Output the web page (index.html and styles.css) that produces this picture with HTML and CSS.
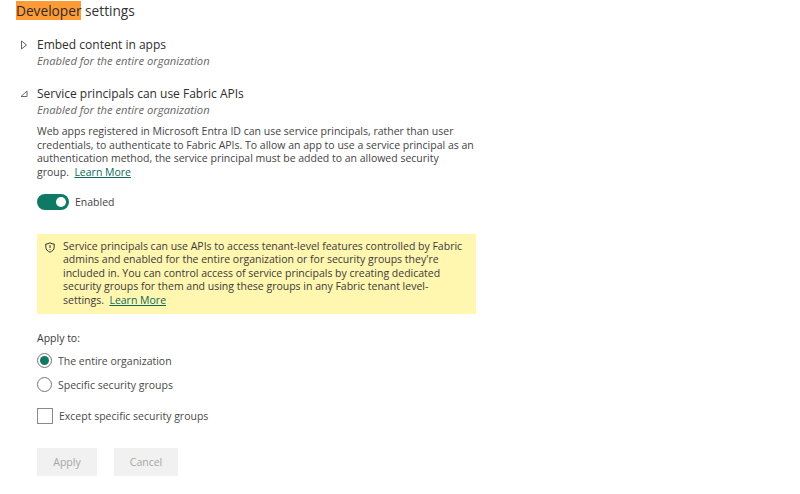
FILE: index.html
```html
<!DOCTYPE html>
<html lang="en">
<head>
<meta charset="utf-8">
<title>Developer settings</title>
<link rel="stylesheet" href="styles.css">
</head>
<body>
<h1 class="title"><mark class="hl">Developer</mark> settings</h1>
<section class="setting collapsed">
  <div class="head">
    <svg class="chev" width="8" height="10" viewBox="0 0 8 10"><path d="M1.5 1 L6.5 5 L1.5 9 Z" fill="none" stroke="#666" stroke-width="1"/></svg>
    <span class="name">Embed content in apps</span>
  </div>
  <p class="sub">Enabled for the entire organization</p>
</section>
<section class="setting">
  <div class="head">
    <svg class="chev" width="8" height="10" viewBox="0 0 8 10"><path d="M7 2 L7 7.5 L1 7.5 Z" fill="none" stroke="#666" stroke-width="1"/></svg>
    <span class="name">Service principals can use Fabric APIs</span>
  </div>
  <p class="sub">Enabled for the entire organization</p>
  <p class="desc">Web apps registered in Microsoft Entra ID can use service principals, rather than user<br>credentials, to authenticate to Fabric APIs. To allow an app to use a service principal as an<br>authentication method, the service principal must be added to an allowed security<br>group.&nbsp; <a class="link" href="#">Learn More</a></p>
  <div class="toggle-row">
    <span class="toggle"><span class="knob"></span></span>
    <span class="toggle-label">Enabled</span>
  </div>
  <div class="notice">
    <svg class="shield" width="10" height="11" viewBox="0 0 10 11"><path d="M5 .7 C6.3 1.7 7.6 2 9.2 2 V5.2 C9.2 7.6 7.4 9.2 5 10.2 C2.6 9.2 .8 7.6 .8 5.2 V2 C2.4 2 3.7 1.7 5 .7 Z" fill="none" stroke="#333" stroke-width="1"/><path d="M5 3 V6" stroke="#333" stroke-width="1"/><circle cx="5" cy="7.5" r=".6" fill="#333"/></svg>
    <p class="notice-text">Service principals can use APIs to access tenant-level features controlled by Fabric<br>admins and enabled for the entire organization or for security groups they're<br>included in. You can control access of service principals by creating dedicated<br>security groups for them and using these groups in any Fabric tenant level-<br>settings.&nbsp; <a class="link" href="#">Learn More</a></p>
  </div>
  <p class="apply-label">Apply to:</p>
  <div class="radios">
    <label class="radio-row"><span class="radio on"></span><span>The entire organization</span></label>
    <label class="radio-row"><span class="radio"></span><span>Specific security groups</span></label>
  </div>
  <label class="check-row"><span class="check"></span><span>Except specific security groups</span></label>
  <div class="buttons">
    <button class="btn apply" disabled>Apply</button>
    <button class="btn cancel" disabled>Cancel</button>
  </div>
</section>
</body>
</html>
```
FILE: styles.css
```css
* { box-sizing: border-box; }
html, body { margin: 0; padding: 0; }
body {
  width: 800px; height: 494px; overflow: hidden; background: #fff;
  font-family: "Open Sans", "Noto Sans", sans-serif; font-size: 10.5px; color: #3a3a3a;
  padding: 1px 0 0 16px;
}
.title { margin: 0; font-size: 13.7px; font-weight: 400; line-height: 19px; color: #333; }
.hl { background: #ff9b36; color: #2b2b2b; }
.setting { margin-top: 15px; padding-left: 21px; position: relative; }
.setting + .setting { margin-top: 16px; }
.head { display: flex; align-items: center; height: 18px; }
.chev { position: absolute; left: 4px; top: 5px; }
.name { font-size: 12px; color: #2e2e2e; }
.sub { margin: 0; font-size: 11.2px; font-style: italic; color: #666; line-height: 15px; }
.desc { margin: 8px 0 0; line-height: 13.7px; color: #444; width: 450px; white-space: nowrap; }
.link { color: #0b6a5a; text-decoration: underline; }
.toggle-row { display: flex; align-items: center; gap: 6px; margin-top: 14px; height: 16px; }
.toggle { width: 32px; height: 16px; border-radius: 8px; background: #0f7a63; display: flex; justify-content: flex-end; align-items: center; padding-right: 3px; }
.knob { width: 10px; height: 10px; border-radius: 50%; background: #fff; }
.toggle-label { color: #444; }
.notice { display: flex; gap: 8px; margin-top: 24px; width: 439px; height: 80px; background: #fff6b0; padding: 6px 8px; }
.shield { flex: none; margin-top: 2px; }
.notice-text { margin: 0; line-height: 13.5px; color: #3a3a3a; white-space: nowrap; }
.apply-label { margin: 16px 0 0; line-height: 16px; }
.radios { display: flex; flex-direction: column; gap: 8px; margin-top: 7px; }
.radio-row, .check-row { display: flex; align-items: center; color: #4a4a4a; }
.radio-row { gap: 6px; height: 16px; }
.radio { width: 15px; height: 15px; border: 1px solid #777; border-radius: 50%; background: #fff; display: flex; align-items: center; justify-content: center; }
.radio.on::after { content: ""; width: 9px; height: 9px; border-radius: 50%; background: #0f7a63; }
.check-row { gap: 6px; margin-top: 15px; height: 16px; }
.check { width: 16px; height: 16px; border: 1px solid #8a8a8a; background: #fff; }
.buttons { display: flex; gap: 17px; margin-top: 24px; }
.btn { height: 28px; border: 0; background: #f1f1f1; color: #a6a6a6; font: inherit; padding: 0; }
.apply { width: 60px; }
.cancel { width: 64px; }
```
